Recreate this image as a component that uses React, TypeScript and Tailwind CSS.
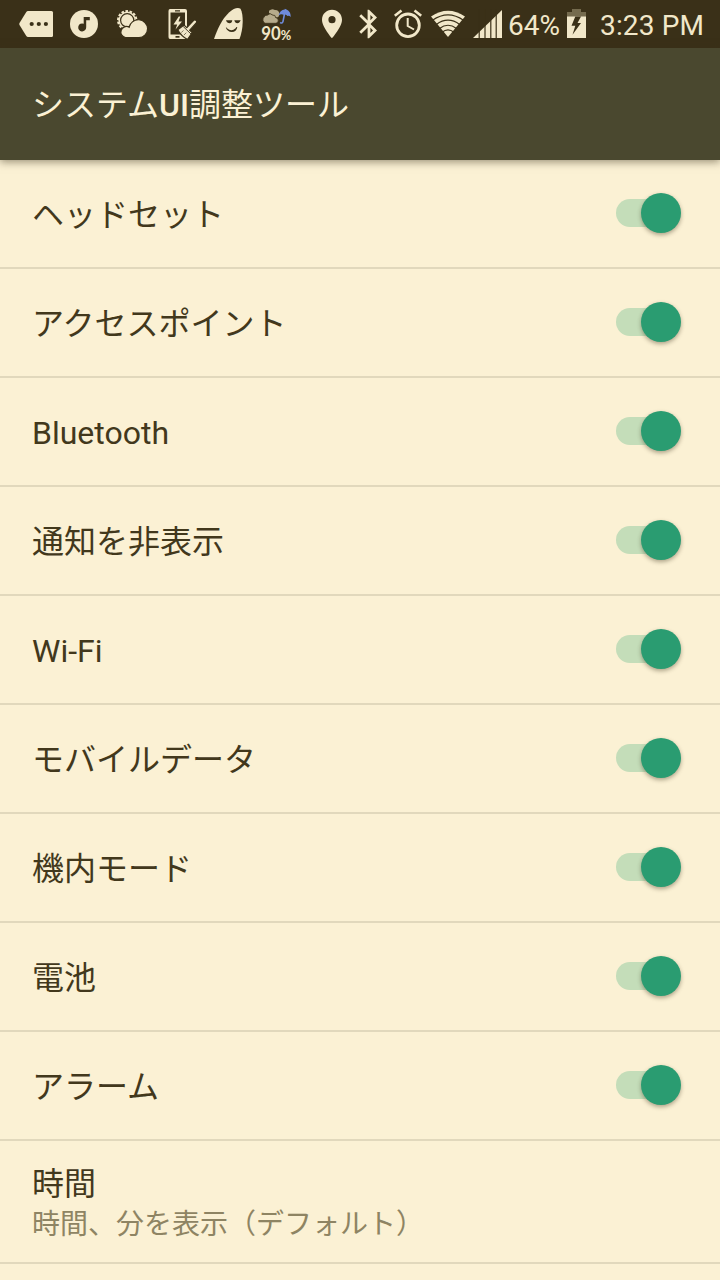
import { useState } from "react";
import type { ReactNode } from "react";

interface Setting { id: string; label: string; }

const SETTINGS: Setting[] = [
  { id: "headset", label: "ヘッドセット" },
  { id: "hotspot", label: "アクセスポイント" },
  { id: "bluetooth", label: "Bluetooth" },
  { id: "dnd", label: "通知を非表示" },
  { id: "wifi", label: "Wi-Fi" },
  { id: "mobile", label: "モバイルデータ" },
  { id: "airplane", label: "機内モード" },
  { id: "battery", label: "電池" },
  { id: "alarm", label: "アラーム" },
];

const BG = "#3a3018";

// Status bar glyphs share one 48px high coordinate space; x and w cut out the glyph's slot.
function Glyph({ x, w, className, children }: { x: number; w: number; className?: string; children: ReactNode }) {
  return (
    <svg width={w} height={48} viewBox={`${x} 0 ${w} 48`} fill="currentColor" className={`block shrink-0 ${className ?? ""}`}>
      {children}
    </svg>
  );
}

function StatusBar() {
  return (
    <div className="flex h-12 items-center bg-[#3a3018] pl-[18px] text-[#f1e7c9]">
      {/* More */}
      <Glyph x={18} w={36}>
        <path d="M28 11H51.5Q53 11 53 12.500V35.500Q53 37 51.500 37H28Q27 37 26.300 36L19.500 25Q19 24 19.500 23L26.300 12Q27 11 28 11Z" />
        <g fill={BG}>
          <circle cx="31.700" cy="24" r="2.100" />
          <circle cx="38.800" cy="24" r="2.100" />
          <circle cx="45.900" cy="24" r="2.100" />
        </g>
      </Glyph>
      {/* Music */}
      <Glyph x={69} w={30} className="ml-[15px]">
        <circle cx="84" cy="24" r="14" />
        <path fill={BG} d="M83.700 17H89.800V20.200H86.200V27.300A4 4 0 1 1 83.700 23.700Z" />
      </Glyph>
      {/* Weather */}
      <Glyph x={116} w={33} className="ml-[17px]">
        <circle cx="127.200" cy="20.300" r="9.200" fill="none" stroke="currentColor" strokeWidth="2" strokeDasharray="2.600 1.530" />
        <circle cx="127.200" cy="20.300" r="8.700" />
        <circle cx="127.200" cy="20.300" r="6.600" fill="none" stroke={BG} strokeWidth="1.200" />
        <path stroke={BG} strokeWidth="1.200" d="M125.500 37.600A5.600 5.600 0 1 1 129.200 27.200A9.300 9.300 0 0 1 147.600 28.500A9 9 0 0 1 139 37.600Z" />
      </Glyph>
      {/* Phone cleaner */}
      <Glyph x={167} w={30} className="ml-[18px]">
        <path fillRule="evenodd" d="M170 9H185Q187 9 187 11V37Q187 39 185 39H170Q168.500 39 168.500 37V11Q168.500 9 170 9ZM170.500 12.500V34.500H185V12.500ZM175 10.300V11.500H180V10.300Z" />
        <path fill={BG} d="M175.500 36H179.500V37.700H175.500Z" />
        <path d="M178.800 16.500L173.500 24.500H177.200L175.500 29.500L182 21.500H178.500L180.300 16.500Z" />
        <path stroke={BG} strokeWidth="1.200" d="M177.800 29.800L184 25L186.800 27.700L193.700 20.300Q195.300 19.300 196.400 20.700Q197.200 22 196 23.200L189.700 30.200L192.200 32.700L187.500 39.600Q181 36 177.800 29.800Z" />
        <path stroke={BG} strokeWidth=".9" fill="none" d="M183.200 26.500L191 34" />
        <path stroke={BG} strokeWidth=".6" fill="none" d="M181.300 32.500L183.500 30.500M184 35L186.300 32.700" />
      </Glyph>
      {/* Smiling face */}
      <Glyph x={213} w={31} className="ml-4">
        <path d="M214 39C217 30 222 19 229 12.500Q236 6.500 240.500 8.700C243.700 14 243.500 29 239.500 39Z" />
        <path fill={BG} d="M226 20.300H232.300Q232 23.300 229.500 23.300Q227.500 23.300 226.500 21.500ZM234.300 20.300H240.700L240 21.500Q239.200 23.300 237.500 23.300Q235 23.300 234.300 20.300ZM225.800 27.500Q226.700 27 227.300 28.500Q231.500 32 235.600 28.200Q236.300 26.800 237.300 27.200Q236.500 31.900 231.800 32Q227.500 31.800 225.800 27.500Z" />
      </Glyph>
      {/* Rain chance */}
      <Glyph x={260} w={33} className="ml-4">
        <path fill="#b6ab8c" d="M269 10.800Q272 8 274.800 10Q279.500 9.800 279.300 14.500Q279 17.500 276.500 17.500L269 13Z" />
        <path fill="#b6ab8c" stroke={BG} strokeWidth=".8" d="M265 23.300A3.900 3.900 0 0 1 264.300 16.800Q265 14.800 267.300 15.200Q270 12.200 273 15.200Q275.300 14.500 275.600 17.500Q278.700 18 278.300 21Q278 23.300 275.500 23.300Z" />
        <path fill="#6f8bdc" d="M278.300 15.800Q280 9.500 284.800 9.400V8.700L286 9.300Q291 11.500 290.800 17Q289 15.300 287.500 16Q286 13.700 283.500 14.800Q281 13.500 278.300 15.800Z" />
        <path fill="none" stroke="#6f8bdc" strokeWidth="1.600" d="M284.700 13L282.900 21.800Q282 24 280.200 22.300" />
        <text x="261.300" y="40" fontSize="18" fontWeight="700" fontFamily="Lato, sans-serif" textLength="19.500" lengthAdjust="spacingAndGlyphs">90</text>
        <text x="280.800" y="40" fontSize="13" fontWeight="700" fontFamily="Lato, sans-serif" textLength="10.500" lengthAdjust="spacingAndGlyphs">%</text>
      </Glyph>
      {/* Location */}
      <Glyph x={321} w={22} className="ml-7">
        <path fillRule="evenodd" d="M332 9.700C326.400 9.700 322 14.100 322 19.700C322 27 332 38.200 332 38.200S342 27 342 19.700C342 14.100 337.600 9.700 332 9.700ZM332 16.100A3.600 3.600 0 1 1 332 23.300A3.600 3.600 0 1 1 332 16.100Z" />
      </Glyph>
      {/* Bluetooth */}
      <Glyph x={358} w={20} className="ml-[15px]">
        <path d="M377 17.500L369 9.700H367.600V20.500L361.200 14.300L359.300 16.200L367.200 24L359.300 31.800L361.200 33.700L367.600 27.500V38.300H369L377 30.400L370.500 24ZM370.400 15L373 17.600L370.400 20.300ZM373 30.400L370.400 33V27.700Z" />
      </Glyph>
      {/* Alarm */}
      <Glyph x={393} w={30} className="ml-[15px]">
        <circle cx="408" cy="25.300" r="11.300" fill="none" stroke="currentColor" strokeWidth="2.800" />
        <path fill="none" stroke="currentColor" strokeWidth="2.600" d="M394.800 15.800L401.500 10.500M421.200 15.800L414.500 10.500" />
        <path fill="none" stroke="currentColor" strokeWidth="2" d="M407.700 18V26L414 29.500" />
      </Glyph>
      {/* Wi-Fi */}
      <Glyph x={430} w={36} className="ml-[7px]">
        <path d="M431 16.500Q448 5 465 16.500L448 37Z" />
        <g fill="none" stroke={BG} strokeWidth="1.200">
          <path d="M432.500 20.300Q448 9.500 463.500 20.300" />
          <path d="M436.300 24.500Q448 15.800 459.700 24.500" />
          <path d="M439.500 28.500Q448 22 456.500 28.500" />
          <path d="M442 32.300Q448 27.500 454 32.300" />
        </g>
      </Glyph>
      {/* Signal */}
      <Glyph x={472} w={31} className="ml-1.5">
        <path d="M473 38L502 10V38Z" />
        <path fill="none" stroke={BG} strokeWidth="1.200" d="M479.200 9V39M485 9V39M490.800 9V39M496.200 9V39" />
      </Glyph>
      <span className="ml-[5px] w-[58px] shrink-0 whitespace-nowrap pt-[3px] font-['Roboto',sans-serif] text-[28px] leading-[45px]">64%</span>
      {/* Charging */}
      <Glyph x={566} w={21}>
        <path fill="#756b4e" d="M567 17V12H572V9H581V12H586V17Z" />
        <path d="M567 16.500H586V38H567Z" />
        <path fill={BG} d="M575.300 16.500L571.500 25.800H575.300L572.500 34.800L581 23H577.500L581 16.500Z" />
      </Glyph>
      <span className="ml-[13px] whitespace-nowrap pt-[3px] font-['Roboto',sans-serif] text-[28px] leading-[45px] tracking-[0.15px]">3:23 PM</span>
    </div>
  );
}

function Toggle({ on, label, onChange }: { on: boolean; label: string; onChange: () => void }) {
  return (
    <button role="switch" aria-checked={on} aria-label={label} onClick={onChange} className="mr-[39px] mb-px flex h-10 w-[65px] items-center">
      <span className={`flex h-7 w-14 items-center rounded-full ${on ? "bg-[#c4ddb9]" : "bg-[#cfc6a9]"}`}>
        <span className={`size-10 shrink-0 rounded-full shadow-[0_2px_4px_rgba(58,48,25,0.4)] ${on ? "ml-[25px] bg-[#2a9c71]" : "-ml-2 bg-[#f1ece0]"}`} />
      </span>
    </button>
  );
}

export default function App() {
  const [enabled, setEnabled] = useState<Record<string, boolean>>(() => Object.fromEntries(SETTINGS.map((s) => [s.id, true])));

  return (
    <div className="h-[1280px] w-[720px] overflow-hidden bg-[#fbf1d4] font-['Roboto','Noto_Sans_CJK_JP',sans-serif] text-[#42381c]">
      <StatusBar />
      <header className="relative flex h-28 items-center bg-[#4a482f] pl-8 shadow-[0_2px_8px_rgba(58,48,25,0.5)]">
        <h1 className="pt-0.5 text-[32px] leading-[48px] text-[#fbf1d4]">
          システム<span className="font-medium">UI</span>調整ツール
        </h1>
      </header>

      {SETTINGS.map((s) => (
        <div key={s.id} className="flex h-[109px] items-center justify-between border-b-2 border-[#e1d8bc] pl-8">
          <span className="pt-0.5 text-[32px] leading-[48px]">{s.label}</span>
          <Toggle on={enabled[s.id]} label={s.label} onChange={() => setEnabled({ ...enabled, [s.id]: !enabled[s.id] })} />
        </div>
      ))}

      {/* Clock format */}
      <div className="flex h-[123px] flex-col justify-center border-b-2 border-[#e1d8bc] pt-[3px] pl-8">
        <div className="text-[32px] leading-[42px]">時間</div>
        <div className="text-[28px] leading-[39px] text-[#8e8463]">時間、分を表示（デフォルト）</div>
      </div>
    </div>
  );
}
